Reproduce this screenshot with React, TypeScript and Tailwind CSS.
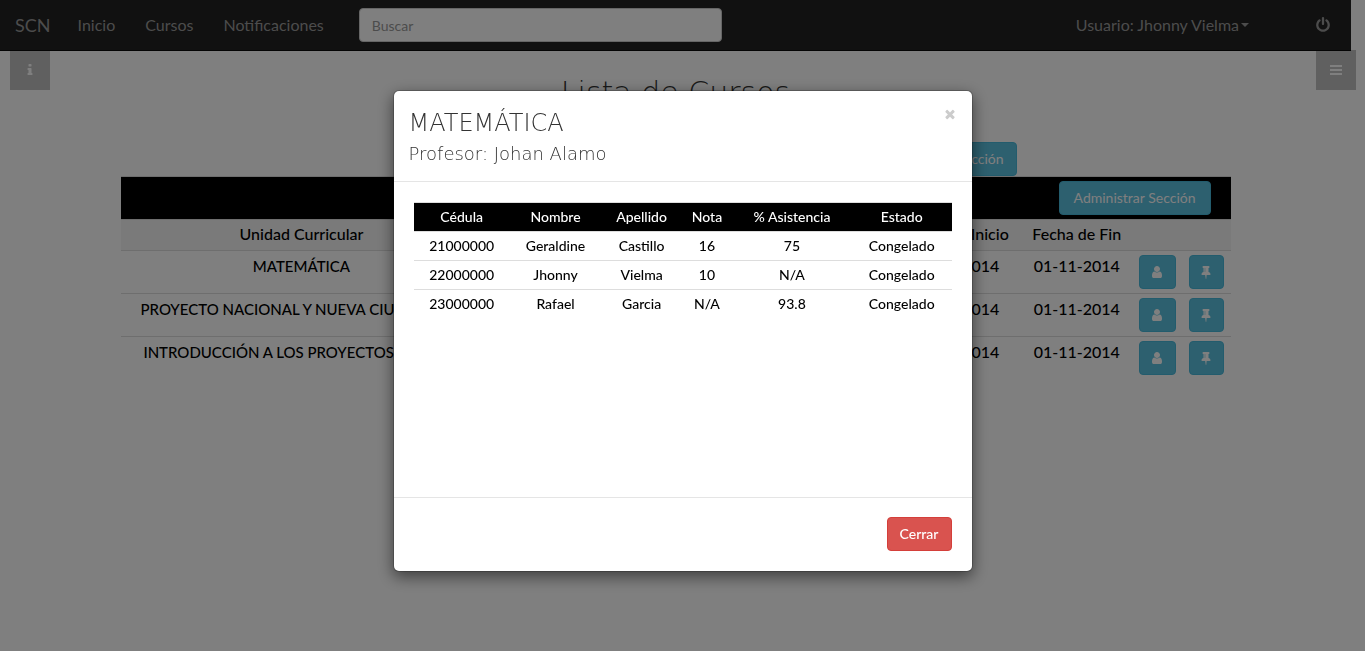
import React from "react";

const icons = {
  user: "M1536 1399q0 109-62.5 187t-150.5 78h-854q-88 0-150.5-78t-62.5-187q0-85 8.5-160.5t31.5-152 58.5-131 94-89 134.5-34.5q131 128 313 128t313-128q76 0 134.5 34.5t94 89 58.5 131 31.5 152 8.5 160.5zm-256-887q0 159-112.5 271.5t-271.5 112.5-271.5-112.5-112.5-271.5 112.5-271.5 271.5-112.5 271.5 112.5 112.5 271.5z",
  power:
    "M1664 896q0 156-61 298t-164 245-245 164-298 61-298-61-245-164-164-245-61-298q0-182 80.5-343t226.5-270q43-32 95.5-25t83.5 50q32 42 24.5 94.5t-49.5 84.5q-98 74-151.5 181t-53.5 228q0 104 40.5 198.5t109.5 163.5 163.5 109.5 198.5 40.5 198.5-40.5 163.5-109.5 109.5-163.5 40.5-198.5q0-121-53.5-228t-151.5-181q-42-32-49.5-84.5t24.5-94.5q31-43 84-50t95 25q146 109 226.5 270t80.5 343zm-640-768v640q0 52-38 90t-90 38-90-38-38-90v-640q0-52 38-90t90-38 90 38 38 90z",
  pin: "M800 864v-448q0-14-9-23t-23-9-23 9-9 23v448q0 14 9 23t23 9 23-9 9-23zm672 352q0 26-19 45t-45 19h-429l-51 483q-2 12-10.5 20.5t-20.5 8.5h-1q-27 0-32-27l-76-485h-404q-26 0-45-19t-19-45q0-123 78.5-221.5t177.5-98.5v-512q-52 0-90-38t-38-90 38-90 90-38h640q52 0 90 38t38 90-38 90-90 38v512q99 0 177.5 98.5t78.5 221.5z",
  times:
    "M1490 1322q0 40-28 68l-136 136q-28 28-68 28t-68-28l-294-294-294 294q-28 28-68 28t-68-28l-136-136q-28-28-28-68t28-68l294-294-294-294q-28-28-28-68t28-68l136-136q28-28 68-28t68 28l294 294 294-294q28-28 68-28t68 28l136 136q28 28 28 68t-28 68l-294 294 294 294q28 28 28 68z",
  bars: "M128 1280h1536v256h-1536zM128 768h1536v256h-1536zM128 256h1536v256h-1536z",
  info: "M1216 1344v128q0 26-19 45t-45 19h-512q-26 0-45-19t-19-45v-128q0-26 19-45t45-19h64v-384h-64q-26 0-45-19t-19-45v-128q0-26 19-45t45-19h384q26 0 45 19t19 45v576h64q26 0 45 19t19 45zm-128-1152v192q0 26-19 45t-45 19h-256q-26 0-45-19t-19-45v-192q0-26 19-45t45-19h256q26 0 45 19t19 45z",
};

function Icon({ name, className = "size-3.5" }: { name: keyof typeof icons; className?: string }) {
  return (
    <svg viewBox="0 0 1792 1792" fill="currentColor" aria-hidden="true" className={className}>
      <path d={icons[name]} />
    </svg>
  );
}

const infoButton =
  "inline-flex h-[34px] items-center justify-center rounded border border-[#46b8da] bg-[#5bc0de] text-sm text-white";

const courses = ["MATEMÁTICA", "PROYECTO NACIONAL Y NUEVA CIUDADANÍA", "INTRODUCCIÓN A LOS PROYECTOS Y AL PNF"];

const students = [
  ["21000000", "Geraldine", "Castillo", "16", "75", "Congelado"],
  ["22000000", "Jhonny", "Vielma", "10", "N/A", "Congelado"],
  ["23000000", "Rafael", "Garcia", "N/A", "93.8", "Congelado"],
];

function Navbar() {
  return (
    <nav className="relative z-10 flex min-h-[51px] items-center border-b border-[#080808] bg-[#222] text-base text-[#999]">
      <a href="#" className="pr-3 pl-[15px] text-lg">SCN</a>
      <a href="#" className="px-[15px]">Inicio</a>
      <a href="#" className="px-[15px]">Cursos</a>
      <a href="#" className="px-[15px]">Notificaciones</a>
      <input
        type="search"
        aria-label="Buscar"
        placeholder="Buscar"
        className="ml-5 h-[34px] w-[363px] rounded border border-[#ccc] bg-white px-3 text-sm placeholder:text-[#999]"
      />
      <a href="#" className="ml-auto flex items-center px-[15px]">
        Usuario: Jhonny Vielma
        <span className="ml-0.5 border-x-4 border-t-4 border-x-transparent border-t-[#999]" />
      </a>
      <a href="#" aria-label="Salir" className="ml-9 pr-5 pl-[15px]">
        <Icon name="power" className="size-4" />
      </a>
    </nav>
  );
}

function CourseTable() {
  return (
    <table className="w-full table-fixed border-collapse text-center text-base leading-[22px] text-black">
      <colgroup>
        <col className="w-[32.6%]" />
        <col className="w-[36.9%]" />
        <col className="w-[11.6%]" />
        <col className="w-[10.1%]" />
        <col className="w-[4.4%]" />
        <col className="w-[4.4%]" />
      </colgroup>
      <thead>
        <tr className="border-t border-[#ddd] bg-black">
          <th colSpan={6} className="py-1 pr-5 text-right">
            <button type="button" className={infoButton + " px-3.5 align-top font-normal"}>Administrar Sección</button>
          </th>
        </tr>
        <tr className="border-t border-[#ddd] bg-[#f5f5f5]">
          {["Unidad Curricular", "", "Fecha de Inicio", "Fecha de Fin", "", ""].map((h, i) => (
            <th key={i} className="whitespace-nowrap px-0 pt-[3px] pb-[5px] font-medium">{h}</th>
          ))}
        </tr>
      </thead>
      <tbody className="font-medium">
        {courses.map((c) => (
          <tr key={c} className="border-t border-[#ddd] align-top">
            <td className="py-1">
              <span className="block truncate px-5 text-[15px]">{c}</span>
            </td>
            <td />
            <td className="py-1">01-08-2014</td>
            <td className="py-1">01-11-2014</td>
            <td className="py-1">
              <button type="button" aria-label="Estudiantes" className={infoButton + " w-[37px] align-top"}>
                <Icon name="user" />
              </button>
            </td>
            <td className="py-1">
              <button type="button" aria-label="Fijar" className={infoButton + " w-[35px] align-top"}>
                <Icon name="pin" />
              </button>
            </td>
          </tr>
        ))}
      </tbody>
    </table>
  );
}

function CourseDialog() {
  return (
    <div className="fixed inset-0 z-30 overflow-auto bg-black/50 pt-[90px]">
      <div
        role="dialog"
        aria-modal="true"
        aria-labelledby="dialog-title"
        className="mx-auto w-full max-w-[580px] rounded-md border border-black/20 bg-white bg-clip-padding shadow-[0_5px_15px_rgba(0,0,0,0.5)]"
      >
        <header className="flex items-start justify-between border-b border-[#e5e5e5] px-[15px] pt-4 pb-3">
          <div className="font-['DejaVu_Sans',sans-serif] font-extralight text-[#333]">
            <h2 id="dialog-title" className="text-2xl leading-8">MATEMÁTICA</h2>
            <h3 className="text-lg leading-[30px]">Profesor: Johan Alamo</h3>
          </div>
          <button type="button" aria-label="Cerrar ventana" className="text-[#ccc]">
            <Icon name="times" />
          </button>
        </header>
        <div className="min-h-[315px] p-5">
          <table className="w-full table-fixed border-collapse text-center text-sm leading-5 text-black">
            <colgroup>
              <col className="w-[17.9%]" />
              <col className="w-[17%]" />
              <col className="w-[15%]" />
              <col className="w-[9.3%]" />
              <col className="w-[22.3%]" />
              <col className="w-[18.5%]" />
            </colgroup>
            <thead>
              <tr className="border-t border-[#ddd] bg-black text-white">
                {["Cédula", "Nombre", "Apellido", "Nota", "% Asistencia", "Estado"].map((h) => (
                  <th key={h} className="px-0 py-1 font-medium">{h}</th>
                ))}
              </tr>
            </thead>
            <tbody className="font-medium">
              {students.map((row) => (
                <tr key={row[0]} className="border-t border-[#ddd]">
                  {row.map((v, i) => (
                    <td key={i} className="px-0 py-1">{v}</td>
                  ))}
                </tr>
              ))}
            </tbody>
          </table>
        </div>
        <footer className="flex justify-end border-t border-[#e5e5e5] px-5 pt-[19px] pb-5">
          <button type="button" className="h-[34px] rounded border border-[#d43f3a] bg-[#d9534f] px-3 text-sm font-medium text-white">
            Cerrar
          </button>
        </footer>
      </div>
    </div>
  );
}

export default function App() {
  return (
    <div className="min-h-screen bg-white pr-3.5 font-['Lato',sans-serif]">
      <Navbar />
      <button type="button" aria-label="Información" className="fixed top-[50px] left-2.5 flex size-10 items-center justify-center bg-[#c0c0c0] text-white">
        <Icon name="info" />
      </button>
      <button type="button" aria-label="Menú" className="fixed top-[50px] right-[9px] flex size-10 items-center justify-center bg-[#c0c0c0] text-white">
        <Icon name="bars" />
      </button>
      <main className="mx-auto max-w-[1140px] px-[15px] pt-[22px]">
        <h1 className="text-center font-['DejaVu_Sans',sans-serif] text-[30px] leading-10 font-extralight text-[#333]">Lista de Cursos</h1>
        <div className="mt-[29px] flex justify-end pr-[214px]">
          <button type="button" className={infoButton + " px-3"}>Agregar Sección</button>
        </div>
        <CourseTable />
      </main>
      <CourseDialog />
    </div>
  );
}
